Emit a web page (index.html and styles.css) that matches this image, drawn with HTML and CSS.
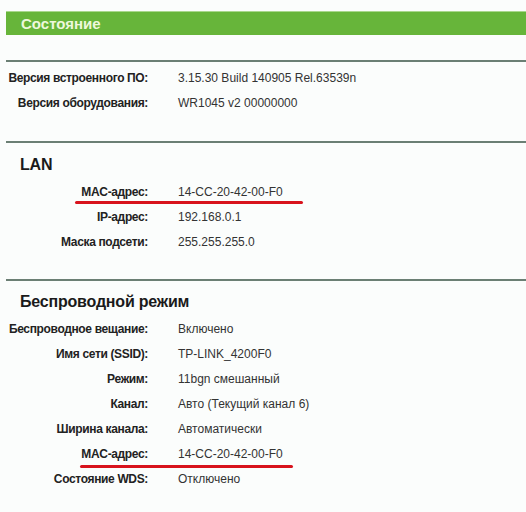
FILE: index.html
```html
<!DOCTYPE html>
<html lang="ru">
<head>
  <meta charset="UTF-8">
  <meta name="viewport" content="width=device-width, initial-scale=1.0">
  <title>Состояние</title>
  <link rel="stylesheet" href="styles.css">
</head>
<body>
  <div class="page">
    <div class="title-bar">Состояние</div>

    <div class="section first">
      <div class="row"><span class="label">Версия встроенного ПО:</span><span class="value">3.15.30 Build 140905 Rel.63539n</span></div>
      <div class="row"><span class="label">Версия оборудования:</span><span class="value">WR1045 v2 00000000</span></div>
    </div>

    <div class="section lan">
      <h2>LAN</h2>
      <div class="row marked mark-lan"><span class="label">MAC-адрес:</span><span class="value">14-CC-20-42-00-F0</span></div>
      <div class="row"><span class="label">IP-адрес:</span><span class="value">192.168.0.1</span></div>
      <div class="row"><span class="label">Маска подсети:</span><span class="value">255.255.255.0</span></div>
    </div>

    <div class="section wireless">
      <h2>Беспроводной режим</h2>
      <div class="row"><span class="label">Беспроводное вещание:</span><span class="value">Включено</span></div>
      <div class="row"><span class="label">Имя сети (SSID):</span><span class="value">TP-LINK_4200F0</span></div>
      <div class="row"><span class="label">Режим:</span><span class="value">11bgn смешанный</span></div>
      <div class="row"><span class="label">Канал:</span><span class="value">Авто (Текущий канал 6)</span></div>
      <div class="row"><span class="label">Ширина канала:</span><span class="value">Автоматически</span></div>
      <div class="row marked mark-wifi"><span class="label">MAC-адрес:</span><span class="value">14-CC-20-42-00-F0</span></div>
      <div class="row"><span class="label">Состояние WDS:</span><span class="value">Отключено</span></div>
    </div>
  </div>
</body>
</html>
```

FILE: styles.css
```css
body {
  margin: 0;
  background-color: #fbfdfc;
  font-family: "Liberation Sans", Arial, sans-serif;
  color: #222;
}
.page {
  padding: 11px 0 0 6px;
}
.title-bar {
  height: 24px;
  line-height: 24px;
  padding-left: 15px;
  background-color: #67b53a;
  border-top: 1px solid #a9d88c;
  box-sizing: border-box;
  color: #eef8dc;
  font-size: 15px;
  font-weight: bold;
  margin-bottom: 25px;
}
.section {
  border-top: 2px solid #6b7f74;
}
.section.first {
  padding: 4px 0 25px;
}
.section.lan {
  padding: 10px 0 24px;
}
.section.wireless {
  padding: 9px 0 0;
}
h2 {
  margin: 0 0 3px;
  height: 24px;
  line-height: 24px;
  padding-left: 14px;
  font-size: 16px;
  font-weight: bold;
  color: #1a1a1a;
  letter-spacing: -0.2px;
}
.row {
  position: relative;
  display: grid;
  grid-template-columns: 142px 1fr;
  column-gap: 30px;
  height: 25px;
  line-height: 25px;
  font-size: 12px;
}
.label {
  text-align: right;
  font-weight: bold;
  color: #222;
  white-space: nowrap;
  letter-spacing: -0.35px;
}
.value {
  color: #333;
  white-space: nowrap;
}
.marked::after {
  content: "";
  position: absolute;
  top: 21px;
  height: 3px;
  border-radius: 2px;
  background-color: #d8131d;
}
.mark-lan::after {
  left: 69px;
  width: 228px;
}
.mark-wifi::after {
  left: 74px;
  top: 23px;
  width: 213px;
}
```
